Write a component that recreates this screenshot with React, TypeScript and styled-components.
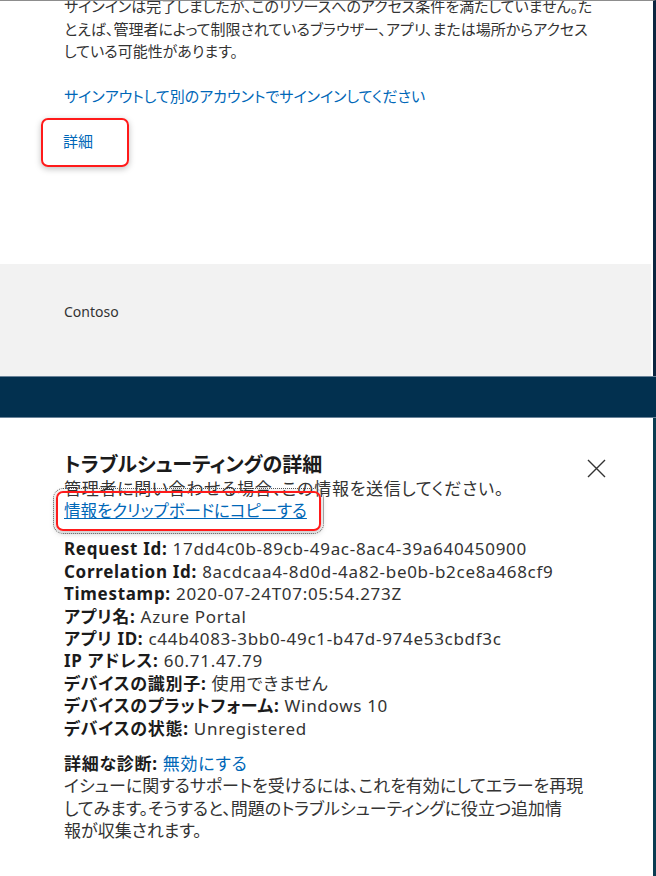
import React from "react";
import styled, { createGlobalStyle } from "styled-components";

const GlobalStyle = createGlobalStyle`
    html, body {
        margin: 0;
        padding: 0;
        background: #ffffff;
        overflow: hidden;
    }
    body {
        font-family: "Noto Sans", "Noto Sans CJK JP", sans-serif;
        font-feature-settings: "palt";
        color: #333333;
    }
`;

const Page = styled.div`
    width: 656px;
    height: 876px;
    display: flex;
    flex-direction: column;
`;

const TopPanel = styled.div`
    height: 376px;
    box-sizing: border-box;
    display: flex;
    flex-direction: column;
    border-top: 1px solid #8d8d8d;
    border-right: 3px solid #0c2640;
    padding-right: 2px;
    overflow: hidden;
`;

const TopBody = styled.div`
    flex: 1;
    padding-left: 64px;
    font-size: 15px;
    line-height: 22.5px;
`;

const Message = styled.p`
    margin: -6px 0 0;
    color: #333333;
`;

const Line = styled.span`
    display: block;
    white-space: nowrap;
`;

const SwitchLink = styled.a`
    display: block;
    margin-top: 22px;
    color: #0067b8;
    text-decoration: none;
    font-size: 15px;
`;

const Frame = styled.div<{ $focus?: boolean }>`
    position: relative;
    width: fit-content;
    border: 2px solid #ff1a1a;
    border-radius: 7px;
    box-shadow: 0 2px 6px rgba(0, 0, 0, 0.25);
    ${({ $focus }) => ($focus ? `outline: 1px dotted #555; outline-offset: 2px;` : "")}
`;

const DetailFrame = styled(Frame)`
    margin: 11px 0 0 -23px;
    padding: 10px 34px 12px 20px;
`;

const DetailLink = styled.a`
    color: #0067b8;
    font-size: 15px;
    line-height: 22px;
    text-decoration: none;
`;

const Footer = styled.div`
    height: 112px;
    flex-shrink: 0;
    box-sizing: border-box;
    background: #f2f2f2;
    padding: 38px 0 0 64px;
    font-size: 14px;
    color: #333333;
`;

const Band = styled.div`
    height: 42px;
    flex-shrink: 0;
    box-sizing: border-box;
    background: #02304f;
    border-top: 1px solid #6a8399;
    border-bottom: 1px solid #6a8399;
`;

const LowerPanel = styled.div`
    flex: 1;
    border-right: 3px solid #0b3c52;
    padding: 34px 47px 0 64px;
    font-size: 17px;
    line-height: 22.4px;
    color: #333333;
`;

const Header = styled.div`
    display: flex;
    justify-content: space-between;
    align-items: center;
`;

const Title = styled.h2`
    margin: 0;
    font-size: 20px;
    line-height: 26px;
    font-weight: 700;
    color: #1b1b1b;
`;

const CloseButton = styled.button`
    width: 20px;
    height: 20px;
    padding: 0;
    border: none;
    background: none;
    display: flex;
    align-items: center;
    justify-content: center;
    margin-top: 6px;
`;

const Subtitle = styled.div`
    line-height: 22px;
    letter-spacing: 0.7px;
    white-space: nowrap;
`;

const CopyFrame = styled(Frame)`
    margin: -9px 0 0 -8px;
    padding: 7px 12px 7px 6px;
`;

const CopyLink = styled.a`
    color: #0067b8;
    text-decoration: underline;
    line-height: 21px;
    font-size: 16.5px;
`;

const InfoList = styled.div`
    margin-top: 7px;
    letter-spacing: 0.7px;
`;

const Row = styled.div`
    white-space: nowrap;
`;

const Label = styled.span`
    font-weight: 700;
    color: #1b1b1b;
`;

const Diagnostics = styled.div`
    margin-top: 13px;
`;

const DiagRow = styled(Row)`
    letter-spacing: 0.7px;
`;

const ToggleLink = styled.a`
    color: #0067b8;
    text-decoration: none;
`;

const info: [string, string][] = [
    ["Request Id", "17dd4c0b-89cb-49ac-8ac4-39a640450900"],
    ["Correlation Id", "8acdcaa4-8d0d-4a82-be0b-b2ce8a468cf9"],
    ["Timestamp", "2020-07-24T07:05:54.273Z"],
    ["アプリ名", "Azure Portal"],
    ["アプリ ID", "c44b4083-3bb0-49c1-b47d-974e53cbdf3c"],
    ["IP アドレス", "60.71.47.79"],
    ["デバイスの識別子", "使用できません"],
    ["デバイスのプラットフォーム", "Windows 10"],
    ["デバイスの状態", "Unregistered"],
];

export default function App() {
    return (
        <Page>
            <GlobalStyle />
            <TopPanel>
                <TopBody>
                    <Message>
                        <Line>サインインは完了しましたが、このリソースへのアクセス条件を満たしていません。た</Line>
                        <Line>とえば、管理者によって制限されているブラウザー、アプリ、または場所からアクセス</Line>
                        <Line>している可能性があります。</Line>
                    </Message>
                    <SwitchLink href="#">サインアウトして別のアカウントでサインインしてください</SwitchLink>
                    <DetailFrame>
                        <DetailLink href="#">詳細</DetailLink>
                    </DetailFrame>
                </TopBody>
                <Footer>Contoso</Footer>
            </TopPanel>
            <Band />
            <LowerPanel>
                <Header>
                    <Title>トラブルシューティングの詳細</Title>
                    <CloseButton aria-label="閉じる">
                        <svg width="19" height="19" viewBox="0 0 19 19">
                            <path d="M1 1 L18 18 M18 1 L1 18" stroke="#333" strokeWidth="1.4" fill="none" />
                        </svg>
                    </CloseButton>
                </Header>
                <Subtitle>管理者に問い合わせる場合、この情報を送信してください。</Subtitle>
                <CopyFrame $focus>
                    <CopyLink href="#">情報をクリップボードにコピーする</CopyLink>
                </CopyFrame>
                <InfoList>
                    {info.map(([label, value]) => (
                        <Row key={label}>
                            <Label>{label}:</Label> {value}
                        </Row>
                    ))}
                </InfoList>
                <Diagnostics>
                    <DiagRow>
                        <Label>詳細な診断:</Label> <ToggleLink href="#">無効にする</ToggleLink>
                    </DiagRow>
                    <Line>イシューに関するサポートを受けるには、これを有効にしてエラーを再現</Line>
                    <Line>してみます。そうすると、問題のトラブルシューティングに役立つ追加情</Line>
                    <Line>報が収集されます。</Line>
                </Diagnostics>
            </LowerPanel>
        </Page>
    );
}
